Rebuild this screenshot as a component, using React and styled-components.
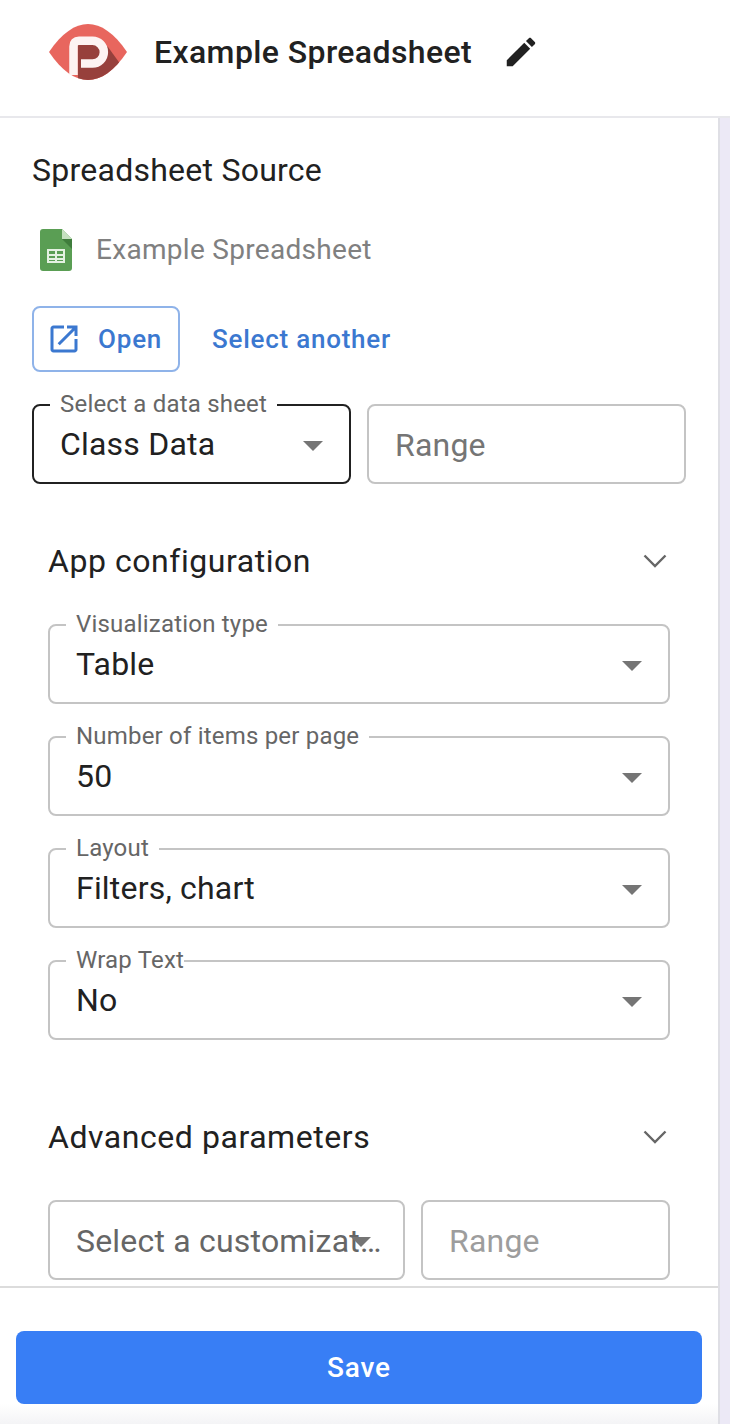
import styled, { createGlobalStyle } from 'styled-components'

const GlobalStyle = createGlobalStyle`
    html, body {
        margin: 0;
        padding: 0;
        background: #ffffff;
    }
    * {
        box-sizing: border-box;
    }
`

const Page = styled.div`
    display: flex;
    flex-direction: column;
    width: 730px;
    height: 1424px;
    overflow: hidden;
    font-family: Roboto, "Liberation Sans", sans-serif;
    color: #212121;
`

// Header
const Header = styled.header`
    display: flex;
    align-items: center;
    flex: none;
    height: 118px;
    padding: 0 0 12px 49px;
    border-bottom: 2px solid #e8e8ec;
`
const Title = styled.h1`
    margin: 0 0 0 26px;
    font-size: 32px;
    line-height: 40px;
    font-weight: 500;
    letter-spacing: 0.4px;
    color: #212121;
`
const EditIcon = styled.svg`
    width: 38px;
    height: 38px;
    margin-left: 30px;
    fill: #212121;
`

// Body
const Body = styled.div`
    display: flex;
    flex: 1;
    min-height: 0;
`
const Panel = styled.main`
    display: flex;
    flex-direction: column;
    flex: 1;
    min-width: 0;
`
const Track = styled.div`
    flex: none;
    width: 12px;
    background: #ece9f6;
    border-left: 2px solid #dfdfe5;
`
const Scroll = styled.div`
    flex: none;
    height: 1168px;
    padding: 34px 32px 6px;
    overflow: hidden;
`
const Heading = styled.h2`
    margin: 0;
    font-size: 32px;
    line-height: 36px;
    font-weight: 400;
    letter-spacing: 0.25px;
    color: #212121;
`
const SheetRow = styled.div`
    display: flex;
    align-items: center;
    height: 42px;
    margin-top: 41px;
    padding-left: 8px;
`
const SheetName = styled.span`
    margin-left: 24px;
    font-size: 28px;
    line-height: 40px;
    letter-spacing: 0.3px;
    color: #808080;
`
const ActionRow = styled.div`
    display: flex;
    align-items: center;
    margin-top: 35px;
`
const OpenButton = styled.button`
    display: flex;
    align-items: center;
    width: 148px;
    height: 66px;
    padding: 0 0 0 12px;
    border: 2px solid #8fb3e9;
    border-radius: 8px;
    background: #ffffff;
    font: 500 26px Roboto, sans-serif;
    letter-spacing: 0.8px;
    color: #3b78d0;
`
const OpenIcon = styled.svg`
    width: 36px;
    height: 36px;
    margin-right: 16px;
    fill: #3b78d0;
`
const TextButton = styled.button`
    margin-left: 32px;
    padding: 0;
    border: 0;
    background: none;
    font: 500 26px Roboto, sans-serif;
    letter-spacing: 0.75px;
    color: #3b78d0;
`
const FieldRow = styled.div`
    display: flex;
    gap: ${(p) => p.$gap}px;
    margin-top: ${(p) => p.$top}px;
`
const FieldStack = styled.div`
    display: flex;
    flex-direction: column;
    gap: 32px;
    margin-top: 45px;
`
const Section = styled.section`
    margin: ${(p) => p.$top}px 16px 0;
`
const SectionHead = styled.div`
    display: flex;
    align-items: center;
    justify-content: space-between;
    height: 36px;
`
const SectionTitle = styled.h3`
    margin: 0;
    font-size: 32px;
    line-height: 36px;
    font-weight: 400;
    letter-spacing: 0.55px;
    color: #212121;
`
const Chevron = styled.svg`
    width: 24px;
    height: 14px;
    margin-right: 3px;
    fill: none;
    stroke: #666666;
    stroke-width: 2.4;
`
const Field = styled.div`
    position: relative;
    display: flex;
    align-items: center;
    flex: ${(p) => (p.$grow ? 1 : 'none')};
    width: ${(p) => (p.$width ? `${p.$width}px` : 'auto')};
    min-width: 0;
    height: 80px;
    padding: ${(p) => (p.$select ? '0 0 0 26px' : '0 26px')};
    border: 2px solid ${(p) => (p.$active ? '#212121' : '#c4c4c4')};
    border-radius: 8px;
    background: #ffffff;
`
const FieldLabel = styled.label`
    position: absolute;
    top: -16px;
    left: 16px;
    padding: ${(p) => (p.$tight ? '0 0 0 10px' : '0 10px')};
    background: #ffffff;
    font-size: 24px;
    line-height: 28px;
    letter-spacing: 0.2px;
    color: #666666;
    white-space: nowrap;
`
const FieldValue = styled.span`
    font-size: 32px;
    line-height: 40px;
    letter-spacing: 0.2px;
    color: #212121;
`
const Placeholder = styled.span`
    margin-top: 2px;
    font-size: 32px;
    line-height: 40px;
    letter-spacing: 0.2px;
    color: ${(p) => (p.$light ? '#757575' : '#666666')};
    opacity: ${(p) => (p.$faint ? 0.7 : 1)};
`
const ClippedValue = styled(Placeholder)`
    flex: none;
    width: 306px;
    overflow: hidden;
    white-space: nowrap;
    text-overflow: ellipsis;
`
const Caret = styled.i`
    position: absolute;
    top: 35px;
    right: ${(p) => p.$right || 26}px;
    width: 0;
    height: 0;
    border-style: solid;
    border-width: 10px 10px 0;
    border-color: #757575 transparent transparent;
`

// Footer
const Footer = styled.footer`
    flex: 1;
    padding: 43px 16px 0;
    border-top: 2px solid #dcdcdc;
    background: linear-gradient(#ffffff 85%, #f4f4f6);
`
const SaveButton = styled.button`
    display: block;
    width: 100%;
    height: 73px;
    border: 0;
    border-radius: 8px;
    background: #387ef5;
    font: 500 28px Roboto, sans-serif;
    letter-spacing: 0.8px;
    color: #ffffff;
`

function Logo() {
    return (
        <svg width="79" height="56" viewBox="49 24 79 56">
            <defs>
                <clipPath id="eye">
                    <path d="M49 52C62 33 75 24 88 24S114 33 127 52C114 71 101 80 88 80S62 71 49 52Z" />
                </clipPath>
            </defs>
            <path fill="#e8665e" d="M49 52C62 33 75 24 88 24S114 33 127 52C114 71 101 80 88 80S62 71 49 52Z" />
            <polygon clipPath="url(#eye)" fill="#97403c" points="78,40 96,40 108,47 132,80 88,90 78,90" />
            <path
                fill="none"
                stroke="#fdf3f2"
                strokeWidth="8.5"
                d="M73.500 75V46.500Q73.500 40.800 79 40.800H92.500A11.350 11.350 0 0 1 92.500 63.500H81"
            />
        </svg>
    )
}

function SheetIcon() {
    return (
        <svg width="32" height="42" viewBox="0 0 32 42">
            <path fill="#5a9e54" d="M3 0H22L32 10V39a3 3 0 0 1-3 3H3a3 3 0 0 1-3-3V3a3 3 0 0 1 3-3Z" />
            <path fill="#c5e1c0" d="M22 0L32 10H22Z" />
            <path fill="#3f7d3c" d="M22 10H32V20Z" />
            <path
                fill="#e4f1e2"
                fillRule="evenodd"
                d="M7 20H25V34H7ZM9 22V25H15V22ZM17 22V25H23V22ZM9 27V29H15V27ZM17 27V29H23V27ZM9 31V32H15V31ZM17 31V32H23V31Z"
            />
        </svg>
    )
}

function ChevronIcon() {
    return (
        <Chevron viewBox="0 0 24 14">
            <path d="M1.500 1.500L12 12L22.500 1.500" />
        </Chevron>
    )
}

const configFields = [
    { label: 'Visualization type', value: 'Table' },
    { label: 'Number of items per page', value: '50' },
    { label: 'Layout', value: 'Filters, chart' },
    { label: 'Wrap Text', value: 'No', tight: true },
]

function App() {
    return (
        <Page>
            <GlobalStyle />
            <Header>
                <Logo />
                <Title>Example Spreadsheet</Title>
                <EditIcon viewBox="0 0 24 24">
                    <path d="M3 17.250V21h3.750L17.810 9.940l-3.750-3.750L3 17.250zM20.710 7.040c.39-.39.39-1.020 0-1.410l-2.340-2.340c-.39-.39-1.020-.39-1.410 0l-1.830 1.830 3.750 3.750 1.830-1.830z" />
                </EditIcon>
            </Header>
            <Body>
                <Panel>
                    <Scroll>
                        <Heading>Spreadsheet Source</Heading>
                        <SheetRow>
                            <SheetIcon />
                            <SheetName>Example Spreadsheet</SheetName>
                        </SheetRow>
                        <ActionRow>
                            <OpenButton>
                                <OpenIcon viewBox="0 0 24 24">
                                    <path d="M19 19H5V5h7V3H5c-1.110 0-2 .9-2 2v14c0 1.100.89 2 2 2h14c1.100 0 2-.9 2-2v-7h-2v7zM14 3v2h3.590l-9.830 9.830 1.410 1.410L19 6.410V10h2V3h-7z" />
                                </OpenIcon>
                                Open
                            </OpenButton>
                            <TextButton>Select another</TextButton>
                        </ActionRow>
                        <FieldRow $gap={16} $top={32}>
                            <Field $active $grow>
                                <FieldLabel>Select a data sheet</FieldLabel>
                                <FieldValue>Class Data</FieldValue>
                                <Caret />
                            </Field>
                            <Field $grow>
                                <Placeholder $light>Range</Placeholder>
                            </Field>
                        </FieldRow>
                        <Section $top={59}>
                            <SectionHead>
                                <SectionTitle>App configuration</SectionTitle>
                                <ChevronIcon />
                            </SectionHead>
                            <FieldStack>
                                {configFields.map((field) => (
                                    <Field key={field.label}>
                                        <FieldLabel $tight={field.tight}>{field.label}</FieldLabel>
                                        <FieldValue>{field.value}</FieldValue>
                                        <Caret />
                                    </Field>
                                ))}
                            </FieldStack>
                        </Section>
                        <Section $top={79}>
                            <SectionHead>
                                <SectionTitle>Advanced parameters</SectionTitle>
                                <ChevronIcon />
                            </SectionHead>
                            <FieldRow $gap={16} $top={45}>
                                <Field $width={357} $select>
                                    <ClippedValue>Select a customization</ClippedValue>
                                    <Caret $right={32} />
                                </Field>
                                <Field $grow>
                                    <Placeholder $light $faint>Range</Placeholder>
                                </Field>
                            </FieldRow>
                        </Section>
                    </Scroll>
                    <Footer>
                        <SaveButton>Save</SaveButton>
                    </Footer>
                </Panel>
                <Track />
            </Body>
        </Page>
    )
}

export default App
